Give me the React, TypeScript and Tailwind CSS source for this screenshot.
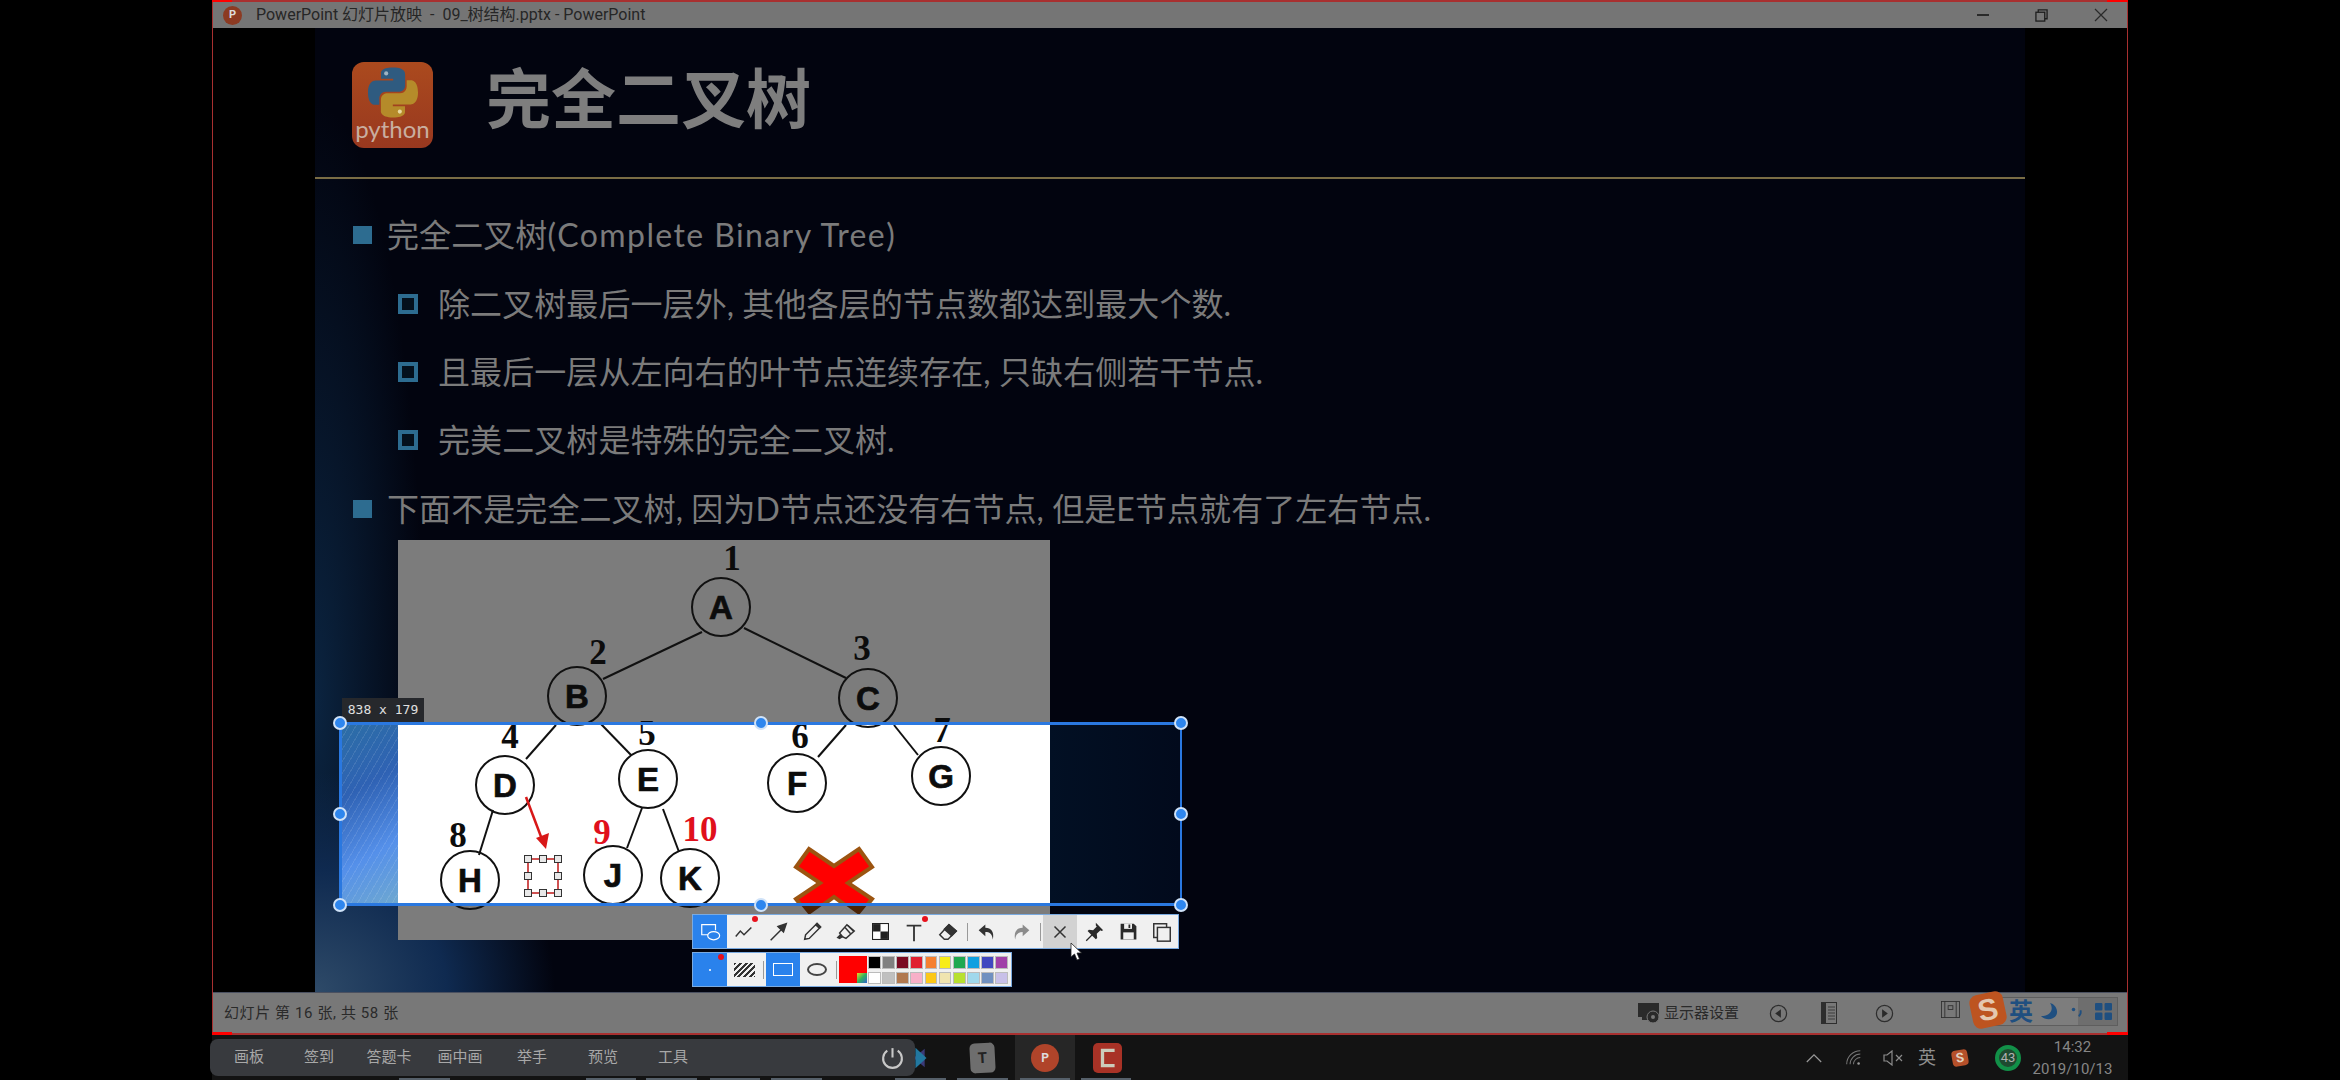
const cjk = "font-['Lato','Noto_Sans_CJK_SC',sans-serif]";

function Node({ x, y, t }: { x: number; y: number; t: string }) {
  return (
    <g>
      <circle cx={x} cy={y} r={29} fill="none" stroke="#111" strokeWidth={2} />
      <text x={x} y={y + 12} textAnchor="middle" fontSize={33} fontWeight={700} fill="#0c0c0c" stroke="#0c0c0c" strokeWidth={0.7} fontFamily="Liberation Sans">{t}</text>
    </g>
  );
}
function Num({ x, y, t, red }: { x: number; y: number; t: string; red?: boolean }) {
  return (
    <text x={x} y={y + 12} textAnchor="middle" fontSize={35} fontWeight={700} fill={red ? "#e0101c" : "#0c0c0c"} fontFamily="Liberation Serif">{t}</text>
  );
}

function Tree() {
  const lines = [
    [701, 632, 602, 679], [743, 628, 845, 678], [555, 725, 525, 759], [599, 723, 630, 755],
    [845, 725, 817, 757], [893, 725, 917, 755], [492, 810, 478, 855], [641, 808, 626, 848], [662, 809, 678, 852],
  ];
  const nodes: [number, number, string][] = [
    [720, 607, "A"], [576, 696, "B"], [867, 698, "C"], [504, 785, "D"], [647, 779, "E"], [796, 783, "F"], [940, 776, "G"], [469, 880, "H"], [612, 875, "J"], [689, 878, "K"],
  ];
  const xPts = "858,849 871,867 847,883 871,899 858,915 833,897 808,915 795,899 819,883 795,867 808,849 833,866";
  const h: [number, number][] = [[527, 859], [542, 859], [557, 859], [527, 876], [557, 876], [527, 893], [542, 893], [557, 893]];
  return (
    <svg viewBox="397 540 652 400" className="block w-[652px] h-[400px]">
      <defs>
        <clipPath id="lit"><rect x="397" y="722" width="652" height="181" /></clipPath>
      </defs>
      <rect x="397" y="540" width="652" height="400" fill="#7c7c7c" />
      <rect x="397" y="722" width="652" height="182" fill="#ffffff" />
      {lines.map((l, i) => (
        <line key={i} x1={l[0]} y1={l[1]} x2={l[2]} y2={l[3]} stroke="#111" strokeWidth={2} />
      ))}
      <polygon points={xPts} fill="#4a2408" />
      <g clipPath="url(#lit)">
        <polygon points={xPts} fill="#ff0000" stroke="#9c5410" strokeWidth={4} />
      </g>
      {nodes.map((n) => (
        <Node key={n[2]} x={n[0]} y={n[1]} t={n[2]} />
      ))}
      <Num x={731} y={558} t="1" />
      <Num x={597} y={652} t="2" />
      <Num x={861} y={648} t="3" />
      <Num x={509} y={736} t="4" />
      <Num x={646} y={733} t="5" />
      <Num x={799} y={736} t="6" />
      <Num x={941} y={730} t="7" />
      <Num x={457} y={835} t="8" />
      <Num x={601} y={832} t="9" red />
      <Num x={699} y={829} t="10" red />
      <line x1="525" y1="797" x2="542" y2="842" stroke="#d81818" strokeWidth={2.5} />
      <polygon points="545,849 535,838 548,833" fill="#d81818" />
      <rect x="527" y="859" width="30" height="34" fill="none" stroke="#c01818" strokeWidth={1.5} />
      {h.map((p, i) => (
        <rect key={i} x={p[0] - 3.5} y={p[1] - 3.5} width="7" height="7" fill="#e8e8e8" stroke="#333" strokeWidth={1} />
      ))}
    </svg>
  );
}

function PythonLogo() {
  const blue = "M54.9 0C26.800 0 28.600 12.200 28.600 12.200v12.600h26.800v3.800H17.900S0 26.600 0 54.900s15.600 27.300 15.600 27.300h9.300V69s-.5-15.600 15.400-15.600h26.500s14.900.2 14.900-14.400V14.800S84 0 54.900 0z";
  return (
    <div className="w-[81px] h-[86px] rounded-[12px] bg-[linear-gradient(180deg,#ab4a1e,#98381f)] flex flex-col items-center shrink-0">
      <svg viewBox="0 0 110 110" className="w-[50px] h-[51px] mt-[5px]">
        <path d={blue} fill="#2f5b80" />
        <circle cx="40" cy="13" r="4.500" fill="#9fb4c2" />
        <g transform="rotate(180 55 55)">
          <path d={blue} fill="#b58b2a" />
          <circle cx="40" cy="13" r="4.500" fill="#e8d8a0" />
        </g>
      </svg>
      <span className="text-[24px] leading-[22px] text-[#c9aea0] font-['Lato',sans-serif]">python</span>
    </div>
  );
}

function Row({ lvl, children }: { lvl: 1 | 2; children: React.ReactNode }) {
  return (
    <div className={`flex items-center ${lvl === 1 ? "pl-[38px] gap-[15px]" : "pl-[83px] gap-[20px]"}`}>
      {lvl === 1 ? (
        <span className="w-[19px] h-[18px] bg-[#2d6c90] shrink-0" />
      ) : (
        <span className="w-[20px] h-[20px] border-[4px] border-[#2d6c90] bg-[#04101c] shrink-0" />
      )}
      <span className={`text-[32px] leading-[40px] tracking-[0.08px] text-[#7b7b7b] whitespace-nowrap ${cjk}`}>{children}</span>
    </div>
  );
}

function Handle({ cls }: { cls: string }) {
  return <span className={`absolute w-[14px] h-[14px] rounded-full bg-[#2e86ee] border-2 border-[#cfe2f8] -translate-x-1/2 -translate-y-1/2 ${cls}`} />;
}

function Selection() {
  return (
    <div className="absolute left-[24px] top-[694px] w-[843px] h-[184px] border-[3px] border-r-2 border-[#2a78e0] flex">
      <div className="w-[56px] h-full bg-[linear-gradient(150deg,#2c6ea6_0%,#2f62b4_35%,#5590ea_70%,#6ea8d0_100%)]">
        <div className="w-full h-full bg-[repeating-linear-gradient(120deg,rgba(255,255,255,0.1)_0px,rgba(255,255,255,0.1)_1px,transparent_1px,transparent_6px)]" />
      </div>
      <div className="w-[652px] h-full" />
      <div className="flex-1 h-full bg-[linear-gradient(90deg,#021024,#020a1c)]" />
      <div className="absolute left-[0px] bottom-full w-[82px] h-[24px] mb-[3px] bg-[#26282c] flex items-center justify-center text-[13px] text-[#e0e0e0] font-['DejaVu_Sans_Mono',monospace] whitespace-pre">838 x 179</div>
      <Handle cls="left-[-2px] top-[-2px]" />
      <Handle cls="left-[419px] top-[-2px]" />
      <Handle cls="left-[839px] top-[-2px]" />
      <Handle cls="left-[-2px] top-[89px]" />
      <Handle cls="left-[839px] top-[89px]" />
      <Handle cls="left-[-2px] top-[180px]" />
      <Handle cls="left-[419px] top-[180px]" />
      <Handle cls="left-[839px] top-[180px]" />
    </div>
  );
}

function Cell({ children, cls = "", dot }: { children?: React.ReactNode; cls?: string; dot?: boolean }) {
  return (
    <div className={`relative w-[34px] h-full flex items-center justify-center shrink-0 ${cls}`}>
      {children}
      {dot && <span className="absolute right-[3px] top-[1px] w-[6px] h-[6px] rounded-full bg-[#e8101c]" />}
    </div>
  );
}
const Sep = () => (
  <div className="w-[5px] h-full flex items-center justify-center shrink-0">
    <span className="w-px h-[18px] bg-[#999]" />
  </div>
);
const Ico = ({ children }: { children: React.ReactNode }) => (
  <svg viewBox="0 0 24 24" className="w-[22px] h-[22px]" fill="none" stroke="#333" strokeWidth={1.600}>{children}</svg>
);

function Toolbars() {
  const row1 = ["#000000", "#808080", "#7a0a22", "#e02030", "#f58030", "#f8ec18", "#20a850", "#10a0e0", "#4048c0", "#a040a8"];
  const row2 = ["#ffffff", "#c0c0c0", "#b07850", "#f8b0c8", "#fcc818", "#f0e4b0", "#b8e030", "#a0d8ec", "#7090c0", "#c8c0e8"];
  return (
    <div className="absolute left-[377px] top-[886px] flex flex-col gap-[3px]">
      <div className="flex w-[487px] h-[35px] bg-[#f0f0f0] border border-[#7aaae0]">
        <div className="w-[34px] h-full bg-[#2a82ec] flex items-center justify-center shrink-0">
          <svg viewBox="0 0 24 24" className="w-[22px] h-[22px]" fill="none" stroke="#fff" strokeWidth={1.300}>
            <path d="M15 15H3V4h15v6" />
            <ellipse cx="16" cy="16" rx="6.500" ry="4.500" fill="#2a82ec" />
          </svg>
        </div>
        <Cell dot><Ico><path d="M3 17l5-6 4 4 8-8" /></Ico></Cell>
        <Cell><Ico><path d="M4 21L19 6" /><path d="M12 6l9-3-3 9z" fill="#333" /></Ico></Cell>
        <Cell><Ico><path d="M4 20l1-5L16 4l4 4L9 19z" /><path d="M16 4l1.500-1.500 4 4L20 8" fill="#333" /></Ico></Cell>
        <Cell><Ico><path d="M5 19l-2-1 3-3 2 2z" fill="#333" /><path d="M8 17l-3-4 8-9 8 7-9 8z" /><path d="M11 7l6 7M14 5l6 6" /></Ico></Cell>
        <Cell><svg viewBox="0 0 16 16" className="w-[17px] h-[17px]"><rect x="0.500" y="0.500" width="15" height="15" fill="#fff" stroke="#222" /><rect x="1" y="1" width="7" height="7" fill="#222" /><rect x="8" y="8" width="7" height="7" fill="#222" /></svg></Cell>
        <Cell dot><Ico><path d="M4 5h16M12 5v17" strokeWidth={2} /></Ico></Cell>
        <Cell><Ico><path d="M3 15L13 4l8 7-9 9H8z" /><path d="M13 4l8 7-5 5-8-7z" fill="#333" /></Ico></Cell>
        <Sep />
        <Cell><svg viewBox="0 0 24 24" className="w-[20px] h-[20px]"><path d="M10 3L2 10l8 7v-5c5 0 8 2 9 9 2-9-2-14-9-14z" fill="#333" /></svg></Cell>
        <Cell><svg viewBox="0 0 24 24" className="w-[20px] h-[20px]"><path d="M14 3l8 7-8 7v-5c-5 0-8 2-9 9-2-9 2-14 9-14z" fill="#8c8c8c" /></svg></Cell>
        <Sep />
        <Cell cls="bg-[#d2d2d2]"><Ico><path d="M6 6l12 12M18 6L6 18" /></Ico></Cell>
        <Cell><svg viewBox="0 0 24 24" className="w-[22px] h-[22px]"><path d="M14 2l8 8-2 1-1-1-4 4 .5 4.500-1.500 1.500-4-4-6 6-1-1 6-6-4-4 1.500-1.500L11 10l4-4-1-1z" fill="#2a2a2a" /></svg></Cell>
        <Cell><svg viewBox="0 0 24 24" className="w-[21px] h-[21px]"><path d="M3 3h15l3 3v15H3z" fill="#2a2a2a" /><rect x="7" y="3" width="9" height="6" fill="#f0f0f0" /><rect x="12" y="4" width="2" height="4" fill="#2a2a2a" /><rect x="6" y="13" width="12" height="8" fill="#f0f0f0" /></svg></Cell>
        <Cell><Ico><rect x="3" y="3" width="14" height="15" /><rect x="7" y="7" width="14" height="15" fill="#f0f0f0" /></Ico></Cell>
      </div>
      <div className="flex w-[320px] h-[35px] bg-[#f0f0f0] border border-[#7aaae0]">
        <Cell cls="bg-[#2a82ec]" dot><span className="w-[2px] h-[2px] bg-white rounded-full" /></Cell>
        <Cell>
          <span className="w-[21px] h-[14px] bg-[repeating-linear-gradient(135deg,#333_0px,#333_2px,transparent_2px,transparent_4px)]" />
        </Cell>
        <Sep />
        <Cell cls="bg-[#2a82ec]"><span className="w-[20px] h-[13px] border border-white" /></Cell>
        <Cell><span className="w-[20px] h-[13px] rounded-[50%] border-2 border-[#444]" /></Cell>
        <Sep />
        <div className="relative w-[28px] h-[27px] mt-[3px] bg-[#ff0000] shrink-0 overflow-hidden">
          <span className="absolute right-0 bottom-0 w-[10px] h-[10px] bg-[linear-gradient(135deg,#e8d820,#30b060,#3060d0)]" />
        </div>
        <div className="ml-[1px] mt-[3px] grid grid-cols-10 grid-rows-2 gap-x-[1.500px] gap-y-[3px] w-[140px] h-[28px]">
          {[...row1, ...row2].map((c, i) => (
            <span key={i} className="border border-[#bbb]" style={{ backgroundColor: c }} />
          ))}
        </div>
      </div>
    </div>
  );
}

function Cursor() {
  return (
    <svg viewBox="0 0 12 19" className="absolute left-[755px] top-[914px] w-[12px] h-[19px]">
      <path d="M1 1v14l3.500-3 2.500 6 2.500-1-2.500-6h4.500z" fill="#fff" stroke="#222" strokeWidth={0.800} />
    </svg>
  );
}

function Slide() {
  return (
    <div className="relative w-[1710px] h-[964px] mx-[102px] bg-[#02040f] bg-[radial-gradient(ellipse_240px_220px_at_0%_100%,#2e4a68_0%,#0f2a50_55%,rgba(2,4,15,0)_100%),radial-gradient(ellipse_110px_600px_at_0%_70%,#0b2440_0%,rgba(2,4,15,0)_100%)] overflow-visible">
      <div className="flex items-center h-[149px] pl-[37px] pt-[4px] gap-[53px]">
        <PythonLogo />
        <span className="mb-[20px] text-[65px] leading-[80px] font-bold text-[#7e7e7e] font-['Noto_Sans_CJK_SC',sans-serif]">完全二叉树</span>
      </div>
      <div className="h-[2px] bg-[#7a6d45]" />
      <div className="mt-[22px] grid grid-rows-5 h-[342px]">
        <Row lvl={1}>完全二叉树<span className="tracking-[1.4px]">(Complete Binary Tree)</span></Row>
        <Row lvl={2}>除二叉树最后一层外, 其他各层的节点数都达到最大个数.</Row>
        <Row lvl={2}>且最后一层从左向右的叶节点连续存在, 只缺右侧若干节点.</Row>
        <Row lvl={2}>完美二叉树是特殊的完全二叉树.</Row>
        <Row lvl={1}>下面不是完全二叉树, 因为D节点还没有右节点, 但是E节点就有了左右节点.</Row>
      </div>
      <div className="ml-[83px] mt-[-3px] w-[652px]">
        <Tree />
      </div>
      <Selection />
      <Toolbars />
      <Cursor />
    </div>
  );
}

function TitleBar() {
  return (
    <div className="h-[26px] bg-[#757575] flex items-center shrink-0 font-['Roboto','Noto_Sans_CJK_SC',sans-serif]">
      <span className="ml-[10px] w-[19px] h-[19px] rounded-full bg-[#8c3a22] flex items-center justify-center text-[11px] font-bold text-[#ddd]">P</span>
      <span className="ml-[14px] text-[16px] text-[#262626] whitespace-pre">PowerPoint 幻灯片放映  -  09_树结构.pptx - PowerPoint</span>
      <div className="ml-auto flex items-center pr-[19px] gap-[46px] text-[#262626]">
        <span className="w-[12px] h-[1.500px] bg-[#2a2a2a]" />
        <svg viewBox="0 0 14 14" className="w-[13px] h-[13px]" fill="none" stroke="#1e1e1e" strokeWidth={1.400}>
          <rect x="1" y="3.500" width="9.500" height="9.500" />
          <path d="M3.500 3.500V1H13v9.500h-2.500" />
        </svg>
        <svg viewBox="0 0 14 14" className="w-[14px] h-[14px]" fill="none" stroke="#2a2a2a" strokeWidth={1.200}>
          <path d="M1 1l12 12M13 1L1 13" />
        </svg>
      </div>
    </div>
  );
}

function StatusBar() {
  return (
    <div className="relative h-[41px] bg-[#787878] border-t border-[#4a5060] flex items-center shrink-0 font-['Roboto','Noto_Sans_CJK_SC',sans-serif]">
      <span className="ml-[11px] text-[15px] tracking-[0.6px] text-[#2a2a2a] whitespace-pre">幻灯片 第 16 张, 共 58 张</span>
      <div className="ml-auto flex items-center mr-[233px]">
        <svg viewBox="0 0 24 22" className="w-[24px] h-[22px]">
          <path d="M1 1h21v13H12v4H5v-3H1z" fill="#2a2a2a" />
          <circle cx="16" cy="15" r="6" fill="#2a2a2a" stroke="#787878" strokeWidth={1} />
          <circle cx="16" cy="15" r="2" fill="#787878" />
        </svg>
        <span className="ml-[3px] text-[15px] text-[#2a2a2a] whitespace-nowrap">显示器设置</span>
        <svg viewBox="0 0 20 20" className="ml-[30px] w-[19px] h-[19px]"><circle cx="10" cy="10" r="8.500" fill="none" stroke="#2e2e2e" strokeWidth={1.300} /><path d="M12.500 5.500v9L6.500 10z" fill="#2a2a2a" /></svg>
        <svg viewBox="0 0 16 22" className="ml-[33px] w-[16px] h-[22px]"><rect x="0.500" y="0.500" width="15" height="21" fill="none" stroke="#2e2e2e" /><rect x="1" y="1" width="4" height="20" fill="#2e2e2e" /><path d="M7 5h7M7 8h7M7 11h7M7 14h7M7 17h7" stroke="#2e2e2e" strokeWidth={0.800} /></svg>
        <svg viewBox="0 0 20 20" className="ml-[38px] w-[19px] h-[19px]"><circle cx="10" cy="10" r="8.500" fill="none" stroke="#2e2e2e" strokeWidth={1.300} /><path d="M7.500 5.500v9l6-4.500z" fill="#2a2a2a" /></svg>
      </div>
      <div className="absolute right-[9px] top-[4px] h-[29px] w-[147px] flex items-center">
        <svg viewBox="0 0 20 18" className="absolute left-[-30px] top-[3px] w-[19px] h-[19px]" fill="none" stroke="#2e2e2e" strokeWidth={0.900}>
          <rect x="0.500" y="0.500" width="19" height="17" />
          <path d="M4 0.500v17M16 0.500v17" />
          <rect x="7.500" y="5" width="5" height="4" />
        </svg>
        <div className="absolute left-[22px] right-0 top-0 h-full border border-[#5e5e5e] bg-[linear-gradient(90deg,#7d7d7d_68%,#6e6e6e_68%)] flex items-center">
          <span className="ml-[15px] text-[24px] font-bold leading-none text-[#1f4f80]">英</span>
          <svg viewBox="0 0 20 20" className="ml-[6px] w-[20px] h-[20px]"><path d="M11 1c4 6 1 13-9 13 6 6 17 3 16-5-.5-4-3-7-7-8z" fill="#1f4f80" /></svg>
          <svg viewBox="0 0 16 16" className="ml-[11px] w-[14px] h-[14px]"><circle cx="4" cy="5" r="2" fill="#1f4f80" /><path d="M12 6c1 3 0 5-2 7" stroke="#1f4f80" strokeWidth={2} fill="none" /></svg>
          <svg viewBox="0 0 16 16" className="ml-[11px] w-[17px] h-[17px]"><rect x="0" y="0" width="7" height="7" rx="1" fill="#1f4f80" /><rect x="9" y="0" width="7" height="7" rx="1" fill="#1f4f80" /><rect x="0" y="9" width="7" height="7" rx="1" fill="#1f4f80" /><rect x="9" y="9" width="7" height="7" rx="1" fill="#1f4f80" /></svg>
        </div>
        <span className="absolute left-0 top-[-4px] w-[34px] h-[34px] rounded-[8px] bg-[#bd5420] rotate-[-12deg] flex items-center justify-center text-[30px] leading-none font-black text-[#e4c8b0] font-['Liberation_Sans',sans-serif]">S</span>
      </div>
    </div>
  );
}

function Taskbar() {
  const labels = [["画板", "w-[70px]"], ["签到", "w-[70px]"], ["答题卡", "w-[70px]"], ["画中画", "w-[72px]"], ["举手", "w-[72px]"], ["预览", "w-[70px]"], ["工具", "w-[70px]"]];
  const marks = ["ml-[187px] w-[51px]", "ml-[136px] w-[50px]", "ml-[10px] w-[51px]", "ml-[13px] w-[50px]", "ml-[11px] w-[51px]", "ml-[73px] w-[51px]", "ml-[11px] w-[51px]", "ml-[12px] w-[50px]", "ml-[11px] w-[50px]"];
  return (
    <div className="relative ml-[212px] w-[1916px] h-[45px] bg-[#131313] flex items-center font-['Roboto','Noto_Sans_CJK_SC',sans-serif]">
      <svg viewBox="0 0 20 26" className="absolute left-[698px] top-[11px] w-[22px] h-[24px]">
        <path d="M2 13L14 3v20z" fill="#3b3a78" />
        <path d="M4 2l12 11L4 24z" fill="#2278a0" />
      </svg>
      <div className="relative ml-[-2px] w-[705px] h-[37px] rounded-[8px] bg-[#383a3e] flex items-center pl-[4px]">
        {labels.map(([t, w]) => (
          <span key={t} className={`${w} text-center text-[15px] text-[#a8a8a8] shrink-0`}>{t}</span>
        ))}
        <svg viewBox="0 0 24 24" className="absolute right-[10px] top-[6px] w-[25px] h-[25px]" fill="none" stroke="#c8c8c8" strokeWidth={2}>
          <path d="M12 3v9" />
          <path d="M7 5.500a9 9 0 1 0 10 0" />
        </svg>
      </div>
      <div className="ml-[55px] w-[25px] h-[30px] rounded-[5px] bg-[#6e6e6e] flex items-center justify-center text-[15px] font-bold text-[#222] rotate-[-3deg]">T</div>
      <div className="ml-[20px] w-[60px] h-[45px] bg-[#262626] flex items-center justify-center">
        <span className="w-[28px] h-[28px] rounded-full bg-[#b0442a] flex items-center justify-center text-[12px] font-bold text-[#ddd]">P</span>
      </div>
      <div className="ml-[18px] w-[29px] h-[30px] rounded-[5px] bg-[#a83226] flex items-center justify-center">
        <svg viewBox="0 0 20 20" className="w-[22px] h-[24px]" fill="none" stroke="#ccb" strokeWidth={3}><path d="M16 3H5v14h11" /></svg>
      </div>
      <div className="absolute left-0 bottom-0 flex h-[2px]">
        {marks.map((m, i) => (
          <span key={i} className={`${m} h-full bg-[#56606a]`} />
        ))}
      </div>
      <div className="ml-auto flex items-center pr-[10px] text-[#8f8f8f]">
        <svg viewBox="0 0 20 12" className="w-[16px] h-[10px]" fill="none" stroke="#9a9a9a" strokeWidth={1.500}><path d="M1 11l9-9 9 9" /></svg>
        <svg viewBox="0 0 20 20" className="ml-[23px] w-[17px] h-[17px]" fill="none" stroke="#777" strokeWidth={1.200}>
          <path d="M2 18A16 16 0 0 1 18 2M6 18A12 12 0 0 1 18 6M10 18a8 8 0 0 1 8-8" />
          <circle cx="16" cy="17" r="1.500" fill="#999" stroke="none" />
        </svg>
        <svg viewBox="0 0 20 16" className="ml-[21px] w-[20px] h-[16px]" fill="none" stroke="#8c8c8c" strokeWidth={1.200}>
          <path d="M1 5h3l5-4v14l-5-4H1z" />
          <path d="M13 5l6 6M19 5l-6 6" />
        </svg>
        <span className="ml-[15px] text-[18px] text-[#8f8f8f]">英</span>
        <span className="ml-[16px] w-[16px] h-[16px] rounded-[4px] bg-[#b5502a] rotate-[-10deg] flex items-center justify-center text-[13px] font-bold text-[#e0d0c0]">S</span>
        <span className="ml-[27px] w-[26px] h-[26px] rounded-full border-[4px] border-[#129048] bg-[#1f4a30] flex items-center justify-center text-[13px] text-[#b0b0b0]">43</span>
        <div className="ml-[6px] w-[91px] flex flex-col items-center text-[15px] leading-[22px] text-[#868686]">
          <span>14:32</span>
          <span>2019/10/13</span>
        </div>
      </div>
    </div>
  );
}

export default function App() {
  return (
    <div className="w-[2340px] h-[1080px] bg-black overflow-hidden flex flex-col">
      <div className="relative ml-[212px] w-[1916px] h-[1035px] flex flex-col border border-t-2 border-b-2 border-[#a83030] shrink-0">
        <TitleBar />
        <Slide />
        <StatusBar />
        <span className="absolute left-[-1px] top-[-2px] w-[20px] h-[2px] bg-[#ff0000]" />
        <span className="absolute right-[-1px] top-[-2px] w-[21px] h-[2px] bg-[#ff0000]" />
        <span className="absolute left-[-1px] bottom-[-2px] w-[20px] h-[3px] bg-[#ff0000]" />
        <span className="absolute right-[-1px] bottom-[-2px] w-[21px] h-[3px] bg-[#ff0000]" />
      </div>
      <Taskbar />
    </div>
  );
}
